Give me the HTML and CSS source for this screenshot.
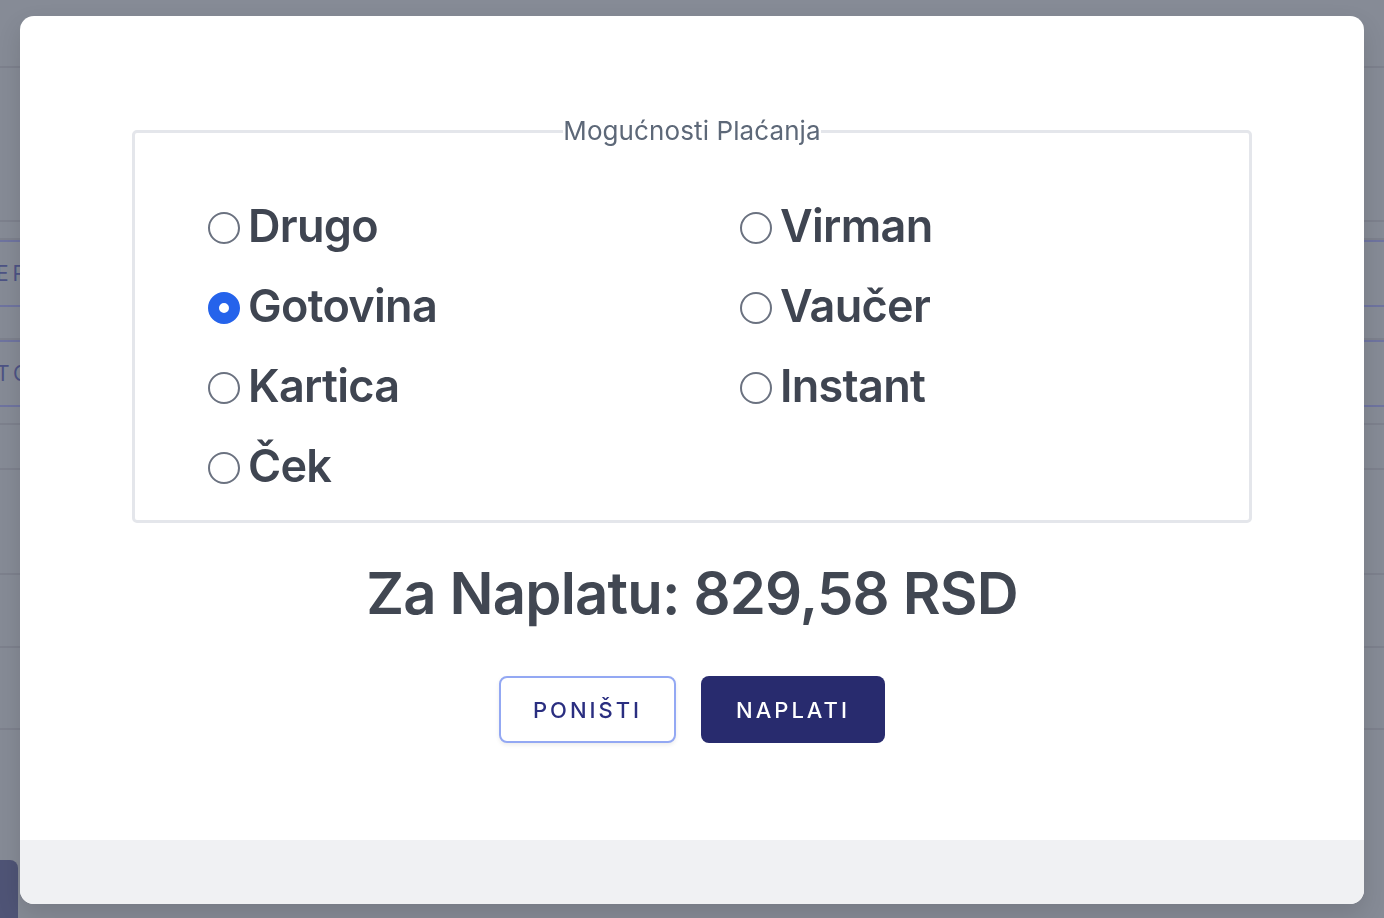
FILE: index.html
```html
<!DOCTYPE html>
<html lang="sr">
<head>
<meta charset="utf-8">
<title>Mogućnosti Plaćanja</title>
<link rel="stylesheet" href="styles.css">
</head>
<body>
<div class="page">
  <div class="bg-row bg-h48"></div>
  <div class="bg-row bg-h154"></div>
  <div class="bg-row bg-h18"></div>
  <div class="bg-row bg-h67 bg-accent"><span class="bg-text">ER</span></div>
  <div class="bg-row bg-h33"></div>
  <div class="bg-row bg-h67 bg-accent"><span class="bg-text">TO</span></div>
  <div class="bg-row bg-h18"></div>
  <div class="bg-row bg-h45"></div>
  <div class="bg-row bg-h105"></div>
  <div class="bg-row bg-h73"></div>
  <div class="bg-row bg-h82"></div>
  <div class="bg-row bg-h130 bg-last"><span class="bg-btn"></span></div>
</div>

<div class="overlay">
  <div class="modal">
    <div class="modal-body">
      <fieldset class="options">
        <legend class="options-title">Mogućnosti Plaćanja</legend>
        <div class="options-grid">
          <label class="option"><input type="radio" name="pay" class="radio"><span>Drugo</span></label>
          <label class="option"><input type="radio" name="pay" class="radio"><span>Virman</span></label>
          <label class="option"><input type="radio" name="pay" class="radio" checked><span>Gotovina</span></label>
          <label class="option"><input type="radio" name="pay" class="radio"><span>Vaučer</span></label>
          <label class="option"><input type="radio" name="pay" class="radio"><span>Kartica</span></label>
          <label class="option"><input type="radio" name="pay" class="radio"><span>Instant</span></label>
          <label class="option"><input type="radio" name="pay" class="radio"><span>Ček</span></label>
        </div>
      </fieldset>
      <div class="total">Za Naplatu: 829,58 RSD</div>
      <div class="actions">
        <button class="btn btn-outline">PONIŠTI</button>
        <button class="btn btn-primary">NAPLATI</button>
      </div>
    </div>
    <div class="modal-footer"></div>
  </div>
</div>
</body>
</html>
```

FILE: styles.css
```css
* { box-sizing: border-box; }

html, body {
  margin: 0;
  padding: 0;
  height: 100%;
}

body {
  background: #868b96;
  font-family: Inter, "Noto Sans", "Liberation Sans", sans-serif;
  overflow: hidden;
}

/* dimmed background page */
.page {
  display: flex;
  flex-direction: column;
  height: 918px;
}
.bg-row {
  border-bottom: 2px solid #7d818d;
  display: flex;
  align-items: center;
  justify-content: space-between;
  flex: none;
}
.bg-h18 { height: 18px; }
.bg-h33 { height: 33px; }
.bg-h45 { height: 45px; }
.bg-h48 { height: 68px; }
.bg-h67 { height: 67px; }
.bg-h73 { height: 73px; }
.bg-h82 { height: 82px; }
.bg-h105 { height: 105px; }
.bg-h130 { height: 188px; border-bottom: none; align-items: flex-end; }
.bg-h154 { height: 154px; }
.bg-accent { border-bottom-color: #6f74a0; border-top: 2px solid #6f74a0; }
.bg-text {
  color: #4d5385;
  font-size: 21px;
  letter-spacing: 4px;
  margin-left: -4px;
}
.bg-btn {
  width: 18px;
  height: 58px;
  background: #4f5476;
  border-top-right-radius: 8px;
}

/* modal */
.overlay {
  position: fixed;
  inset: 0;
  padding: 16px 20px 14px 20px;
  display: flex;
}
.modal {
  flex: 1;
  background: #ffffff;
  border-radius: 14px;
  overflow: hidden;
  display: flex;
  flex-direction: column;
  box-shadow: 0 10px 25px rgba(0, 0, 0, 0.12);
}
.modal-body {
  flex: 1;
  padding: 100px 112px 0 112px;
  display: flex;
  flex-direction: column;
}
.modal-footer {
  height: 64px;
  background: #f0f1f3;
  flex: none;
}

.options {
  margin: 0;
  border: 3px solid #e4e6eb;
  border-radius: 5px;
  padding: 42px 0 12px 0;
  min-width: 0;
}
.options-title {
  margin: 0 auto;
  padding: 0;
  font-size: 26px;
  line-height: 30px;
  color: #5d6878;
  font-weight: 400;
  letter-spacing: 0.1px;
}
.options-grid {
  display: grid;
  grid-template-columns: 532px 1fr;
  grid-auto-rows: 80px;
  padding-left: 73px;
}
.option {
  display: flex;
  align-items: center;
  gap: 8px;
  font-size: 45px;
  font-weight: 600;
  color: #3f4551;
  cursor: pointer;
  letter-spacing: -0.7px;
}
.option span {
  position: relative;
  top: -3px;
}
.radio {
  appearance: none;
  -webkit-appearance: none;
  margin: 0;
  width: 32px;
  height: 32px;
  border-radius: 50%;
  border: 2px solid #6b7280;
  background: #ffffff;
  flex: none;
}
.radio:checked {
  border: 11px solid #2563eb;
  background: #ffffff;
}

.total {
  text-align: center;
  font-size: 58px;
  font-weight: 600;
  color: #414752;
  margin-top: 30px;
  line-height: 80px;
  letter-spacing: -0.8px;
}

.actions {
  display: flex;
  justify-content: center;
  gap: 25px;
  margin-top: 43px;
}
.btn {
  height: 67px;
  border-radius: 8px;
  font-family: inherit;
  font-size: 22px;
  font-weight: 500;
  letter-spacing: 3px;
  cursor: pointer;
}
.btn-outline {
  width: 177px;
  background: #ffffff;
  color: #2a2e80;
  border: 2px solid #93a8f3;
  box-shadow: 0 2px 4px rgba(0, 0, 0, 0.08);
}
.btn-primary {
  width: 184px;
  background: #282b6e;
  color: #ffffff;
  border: none;
}
```
